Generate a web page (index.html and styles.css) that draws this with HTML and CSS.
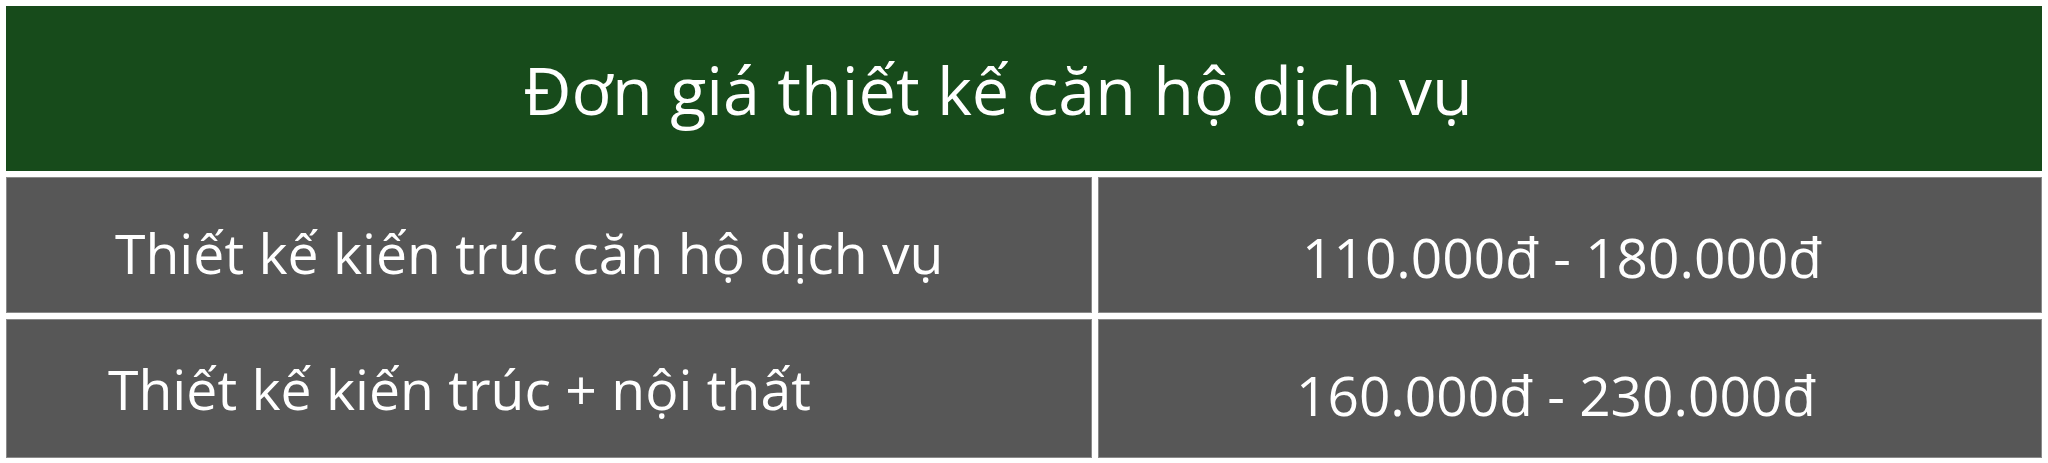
FILE: index.html
```html
<!DOCTYPE html>
<html lang="vi">
<head>
<meta charset="utf-8">
<link rel="stylesheet" href="styles.css">
</head>
<body>
<div class="price-table">
  <div class="head">Đơn giá thiết kế căn hộ dịch vụ</div>
  <div class="cell label row1">Thiết kế kiến trúc căn hộ dịch vụ</div>
  <div class="cell price row1">110.000đ - 180.000đ</div>
  <div class="cell label row2">Thiết kế kiến trúc + nội thất</div>
  <div class="cell price row2">160.000đ - 230.000đ</div>
</div>
</body>
</html>
```

FILE: styles.css
```css
html, body {
  margin: 0;
  padding: 0;
  background: #ffffff;
}
.price-table {
  display: grid;
  grid-template-columns: 1086px 944px;
  grid-template-rows: 165px 136px 139px;
  gap: 6px;
  padding: 6px;
  width: 2048px;
  box-sizing: border-box;
  font-family: "Open Sans", "Noto Sans", sans-serif;
  color: #ffffff;
}
.head {
  grid-column: 1 / 3;
  background: #174b1b;
  display: flex;
  align-items: center;
  justify-content: center;
  font-size: 66.5px;
  padding-right: 52px;
}
.cell {
  background: #575757;
  display: flex;
  align-items: center;
  box-shadow: inset 0 0 0 1px #8a8a8a;
  font-size: 55.3px;
}
.label {
  justify-content: flex-start;
}
.price {
  justify-content: flex-start;
  font-size: 55px;
}
.label.row1 { padding: 14px 0 0 109px; }
.label.row2 { padding: 0 0 0 102px; }
.price.row1 { padding: 22px 0 0 204px; }
.price.row2 { padding: 12px 0 0 198px; }
```
